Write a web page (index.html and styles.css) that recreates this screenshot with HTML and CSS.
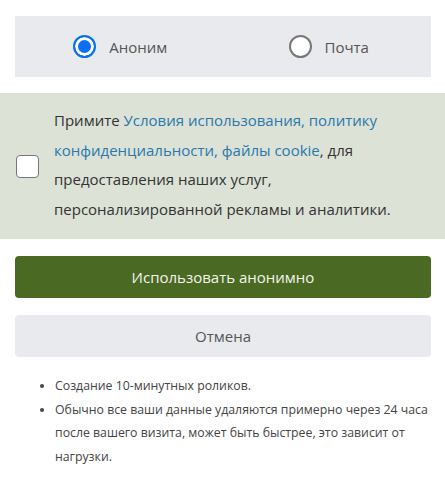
FILE: index.html
```html
<!DOCTYPE html>
<html lang="ru">
<head>
	<meta charset="UTF-8">
	<title>Анонимно</title>
	<link rel="stylesheet" href="styles.css">
</head>
<body>
	<div class="container">
		<div class="mode">
			<label class="mode-item"><span class="radio checked"></span>Аноним</label>
			<label class="mode-item"><span class="radio"></span>Почта</label>
		</div>

		<div class="terms">
			<span class="check"></span>
			<p>Примите <a href="#">Условия использования, политику конфиденциальности, файлы cookie</a>, для предоставления наших услуг, персонализированной рекламы и аналитики.</p>
		</div>

		<div class="actions">
			<div class="btn btn-main">Использовать анонимно</div>
			<div class="btn btn-cancel">Отмена</div>
		</div>

		<ul class="notes">
			<li>Создание 10-минутных роликов.</li>
			<li>Обычно все ваши данные удаляются примерно через 24 часа после вашего визита, может быть быстрее, это зависит от нагрузки.</li>
		</ul>
	</div>
</body>
</html>
```

FILE: styles.css
```css
*{padding:0;margin:0;box-sizing:border-box;}
body{
	background:#fff;
	font-family:"Open Sans","Noto Sans",Arial,sans-serif;
	color:#333;
}
.container{
	width:445px;
	padding-top:16px;
}
.mode{
	display:flex;
	margin:0 14px 0 15px;
	height:61px;
	background:#e9eaed;
}
.mode-item{
	flex:1;
	display:flex;
	align-items:center;
	justify-content:center;
	font-size:15px;
	color:#555;
}
.radio{
	width:23px;
	height:23px;
	margin-right:13px;
	border:2px solid #777;
	border-radius:50%;
	background:#fff;
}
.radio.checked{
	border-color:#0a6ff0;
	background:#0a6ff0;
	box-shadow:inset 0 0 0 3px #fff;
}
.mode-item:first-child{padding-left:3px;}
.mode-item:last-child{padding-left:4px;}

.terms{
	display:flex;
	align-items:center;
	margin-top:16px;
	height:146px;
	padding:0 0 0 16px;
	background:#dce2d6;
}
.check{
	flex:none;
	width:23px;
	height:23px;
	margin-right:15px;
	border:1px solid #777;
	border-radius:4px;
	background:#fff;
}
.terms p{
	width:350px;
	font-size:15px;
	line-height:29.5px;
	color:#333;
	padding-bottom:2px;
}
.terms a{
	color:#2a78ac;
	text-decoration:none;
}

.actions{
	margin:17px 14px 0 15px;
}
.btn{
	height:42px;
	line-height:42px;
	text-align:center;
	font-size:15px;
	border-radius:4px;
}
.btn-main{
	background:#4a6a23;
	color:#f4f4ee;
}
.btn-cancel{
	margin-top:17px;
	background:#e9eaed;
	color:#555;
}

.notes{
	margin:17px 4px 0 55px;
	font-size:12.3px;
	line-height:23.5px;
	color:#444;
}
```
